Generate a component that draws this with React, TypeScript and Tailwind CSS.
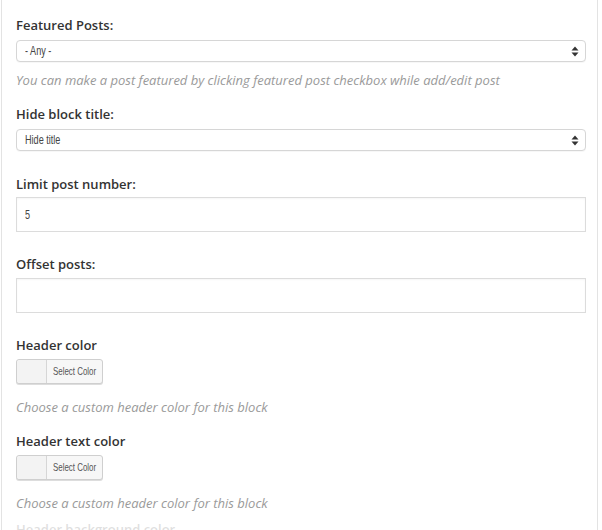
import React from "react";

const labelCls =
  "text-[13px] leading-[18px] font-semibold text-[#333] font-['Open_Sans',sans-serif]";
const hintCls =
  "text-[13px] leading-[18px] italic text-[#9a9a9a] font-['Open_Sans',sans-serif]";
const narrowCls =
  "inline-block whitespace-nowrap origin-left scale-x-[0.7] font-['Liberation_Sans',Arial,sans-serif] text-[13px] text-[#444]";

function Arrows() {
  return (
    <svg width="8" height="11" viewBox="0 0 8 11" className="shrink-0">
      <path d="M4 0.5 L7.5 4.5 L0.5 4.5 Z" fill="#333" />
      <path d="M4 10.5 L7.5 6.5 L0.5 6.5 Z" fill="#333" />
    </svg>
  );
}

function Select({ value }: { value: string }) {
  return (
    <div className="h-[22px] w-[570px] rounded-[4px] border border-[#d6d6d6] bg-white flex items-center pl-[8px] pr-[6px] justify-between shadow-[0_1px_0_rgba(0,0,0,0.03)]">
      <span className={narrowCls}>{value}</span>
      <Arrows />
    </div>
  );
}

function TextInput({ value }: { value?: string }) {
  return (
    <div className="h-[35px] w-[570px] border border-[#dcdcdc] bg-white flex items-center pl-[8px] shadow-[inset_0_1px_2px_rgba(0,0,0,0.04)]">
      <span className={narrowCls}>{value}</span>
    </div>
  );
}

function ColorButton() {
  return (
    <div className="h-[25px] w-[87px] rounded-[3px] border border-[#cfcfcf] bg-[#f7f7f7] flex shadow-[0_1px_0_#ddd]">
      <div className="w-[30px] h-full bg-[#f3f3f3] border-r border-[#d6d6d6] rounded-l-[3px]" />
      <div className="flex-1 flex items-center pl-[6px] overflow-hidden">
        <span className="inline-block whitespace-nowrap origin-left scale-x-[0.72] font-['Liberation_Sans',Arial,sans-serif] text-[11px] text-[#555]">
          Select Color
        </span>
      </div>
    </div>
  );
}

export default function App() {
  return (
    <div className="w-[602px] h-[530px] overflow-hidden bg-white">
      <div className="ml-[1px] w-[597px] h-[530px] border-l border-r border-[#e3e3e3] pl-[14px] flex flex-col">
        <div className={labelCls + " mt-[16px]"}>Featured Posts:</div>
        <div className="mt-[6px]">
          <Select value="- Any -" />
        </div>
        <div className={hintCls + " mt-[9px]"}>
          You can make a post featured by clicking featured post checkbox while add/edit post
        </div>

        <div className={labelCls + " mt-[16px]"}>Hide block title:</div>
        <div className="mt-[6px]">
          <Select value="Hide title" />
        </div>

        <div className={labelCls + " mt-[24px]"}>Limit post number:</div>
        <div className="mt-[4px]">
          <TextInput value="5" />
        </div>

        <div className={labelCls + " mt-[23px]"}>Offset posts:</div>
        <div className="mt-[5px]">
          <TextInput />
        </div>

        <div className={labelCls + " mt-[23px]"}>Header color</div>
        <div className="mt-[5px]">
          <ColorButton />
        </div>
        <div className={hintCls + " mt-[14px]"}>Choose a custom header color for this block</div>

        <div className={labelCls + " mt-[16px]"}>Header text color</div>
        <div className="mt-[5px]">
          <ColorButton />
        </div>
        <div className={hintCls + " mt-[14px]"}>Choose a custom header color for this block</div>

        <div className={labelCls + " mt-[8px] opacity-15"}>Header background color</div>
      </div>
    </div>
  );
}
